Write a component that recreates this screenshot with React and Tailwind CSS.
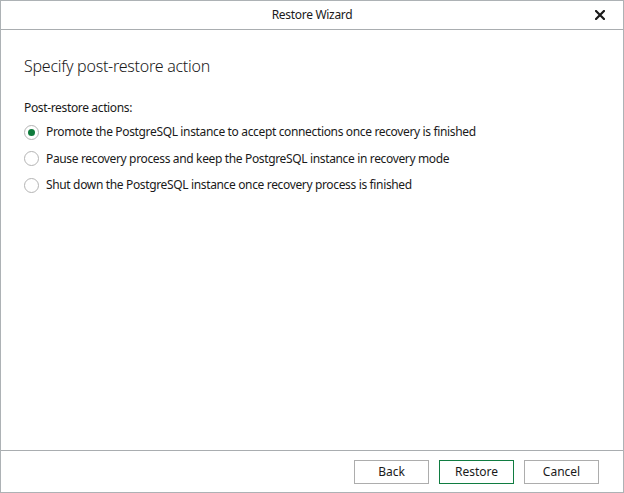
const options = [
  'Promote the PostgreSQL instance to accept connections once recovery is finished',
  'Pause recovery process and keep the PostgreSQL instance in recovery mode',
  'Shut down the PostgreSQL instance once recovery process is finished',
];

function Radio({ checked }) {
  return (
    <span className="flex h-[15px] w-[15px] shrink-0 items-center justify-center rounded-full border border-[#b4b4b4] bg-white">
      {checked && <span className="h-[7px] w-[7px] rounded-full bg-[#0f7b3c]" />}
    </span>
  );
}

export default function App() {
  return (
    <div
      className="flex h-[493px] w-[624px] flex-col border border-[#adb2b5] bg-white text-[#1a1a1a]"
      style={{ fontFamily: '"Noto Sans", "Open Sans", sans-serif' }}
    >
      <div className="relative flex h-[29px] shrink-0 items-center justify-center border-b border-[#a9adb0] text-[12px]">
        <span className="tracking-[-0.3px]">Restore Wizard</span>
        <svg className="absolute right-[18px] top-[9px]" width="10" height="10" viewBox="0 0 10 10">
          <path d="M1 1 L9 9 M9 1 L1 9" stroke="#1a1a1a" strokeWidth="2.2" strokeLinecap="square" />
        </svg>
      </div>

      <div className="flex flex-1 flex-col px-[23px] pt-[25px]">
        <h1 className="text-[16px] font-light leading-[22px] tracking-[-0.25px]">Specify post-restore action</h1>
        <div className="mt-[23px] text-[12px] leading-[16px] tracking-[-0.35px]">Post-restore actions:</div>
        <div className="mt-[8px] flex flex-col gap-[10.5px] text-[12px]">
          {options.map((o, i) => (
            <label key={o} className="flex h-[16px] items-center gap-[7px]">
              <Radio checked={i === 0} />
              <span className="tracking-[-0.35px]">{o}</span>
            </label>
          ))}
        </div>
      </div>

      <div className="flex h-[42px] shrink-0 items-center justify-end gap-[10px] border-t border-[#a9adb0] pr-[24px] text-[12px]">
        <button className="h-[24px] w-[75px] border border-[#adadad] bg-white">Back</button>
        <button className="h-[24px] w-[75px] border border-[#107c41] bg-white">Restore</button>
        <button className="h-[24px] w-[75px] border border-[#adadad] bg-white">Cancel</button>
      </div>
    </div>
  );
}
